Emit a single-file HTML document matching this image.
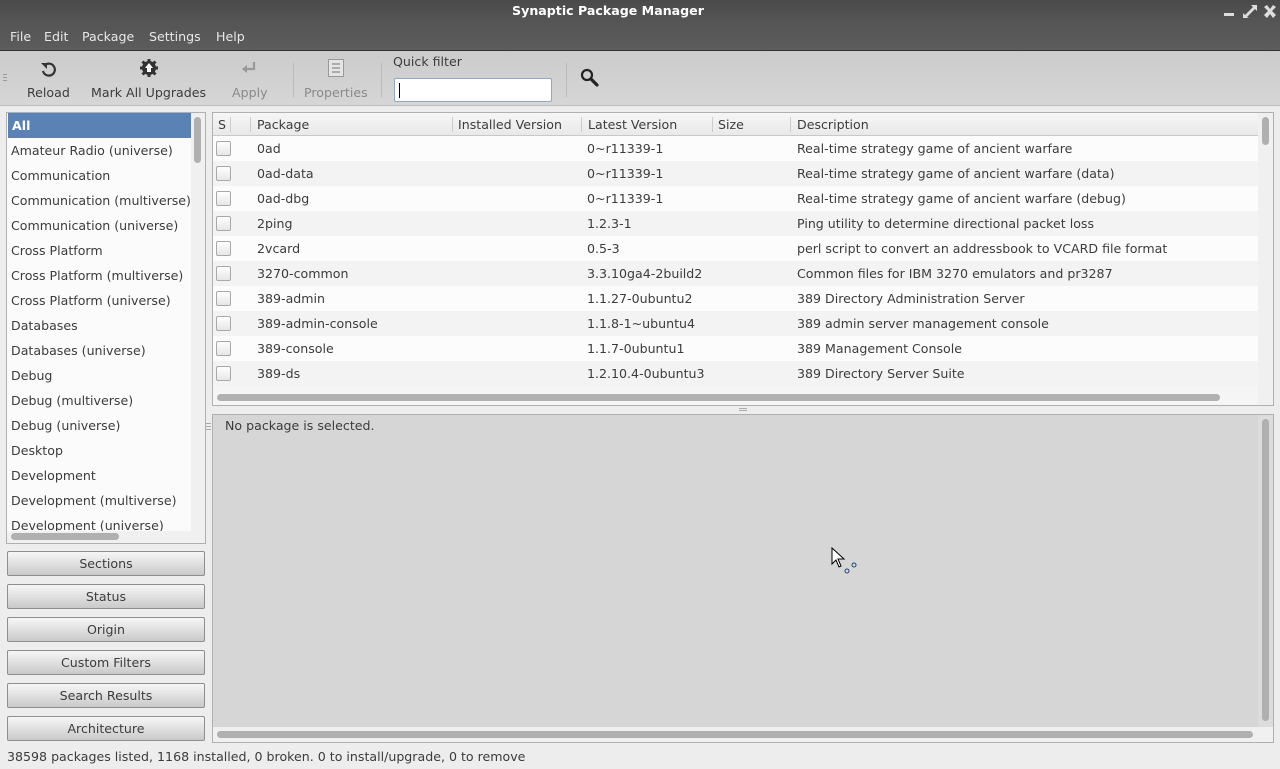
<!DOCTYPE html>
<html><head><meta charset="utf-8"><style>
*{margin:0;padding:0;box-sizing:border-box}
body{width:1280px;height:769px;overflow:hidden;background:#ededed;font-family:"DejaVu Sans","Liberation Sans",sans-serif;font-size:12.6px;color:#3c3c3c;position:relative}
.a{position:absolute}
#title{left:0;top:1px;width:1216px;height:22px;background:transparent;color:#fff;font-weight:bold;text-align:center;line-height:20px;font-size:12.6px}
#tbg{left:0;top:0;width:1280px;height:22px;background:linear-gradient(#4a4a4a,#555)}
#menu{left:0;top:22px;width:1280px;height:29px;background:linear-gradient(#555,#5c5c5c);border-bottom:1px solid #333;color:#e8e8e8}
#menu span{position:absolute;top:7px}
#tb{left:0;top:51px;width:1280px;height:55px;background:linear-gradient(#cbcbcb,#d6d6d6);border-bottom:1px solid #bdbdbd}
.tl{position:absolute;top:34px;color:#3c3c3c}
.dis{color:#8a8a8a}
.sep{position:absolute;top:12px;width:1px;height:34px;background:#bbb}
#left{left:6px;top:112px;width:200px;height:432px;background:#fbfbfb;border:1px solid #b0b0b0;overflow:hidden}
#left div.r{position:absolute;left:0;width:184px;height:25px;line-height:25px;padding-left:4px;white-space:nowrap;overflow:hidden}
.btn{position:absolute;left:7px;width:198px;height:25px;border:1px solid #8e8e8e;border-radius:2px;background:linear-gradient(#f6f6f6,#dcdcdc 60%,#c9c9c9);text-align:center;line-height:24px;color:#3c3c3c}
#tbl{left:212px;top:112px;width:1062px;height:294px;background:#fcfcfc;border:1px solid #b0b0b0;overflow:hidden}
.hd{position:absolute;top:0;height:23px;line-height:24px;background:linear-gradient(#f6f6f6,#e9e9e9);border-bottom:1px solid #c8c8c8}
.hd span{position:absolute;top:0}
.hs{position:absolute;top:4px;width:1px;height:15px;background:#ccc}
.row{position:absolute;left:0;width:1045px;height:25px;line-height:26px}
.row span{position:absolute;top:0;white-space:nowrap}
.cb{position:absolute;left:3px;top:5px;width:15px;height:15px;border:1px solid #a9a9a9;border-radius:2px;background:linear-gradient(#fff,#e6e6e6)}
#det{left:212px;top:414px;width:1062px;height:329px;background:#d6d6d6;border:1px solid #b0b0b0}
</style></head><body>
<div id="tbg" class="a"></div>
<div id="title" class="a">Synaptic Package Manager</div>
<svg class="a" style="left:1222px;top:4px" width="56" height="16">
<rect x="2" y="9" width="10" height="3" fill="#ddd"/>
<path d="M21 14 L21 9 L23 11 L31 3 L29 1 L35 1 L35 7 L33 5 L25 13 L27 14 Z" fill="#ddd"/>
<path d="M42 3 L45 1 L48 5 L51 1 L54 3 L50 7 L54 11 L51 14 L48 10 L45 14 L42 11 L46 7Z" fill="#ddd"/>
</svg>
<div id="menu" class="a"><span style="left:10px">File</span><span style="left:44px">Edit</span><span style="left:82px">Package</span><span style="left:149px">Settings</span><span style="left:216px">Help</span></div>
<div id="tb" class="a">
<svg class="a" style="left:3px;top:23px" width="4" height="8"><rect y="0" width="4" height="1" fill="#999"/><rect y="3" width="4" height="1" fill="#999"/><rect y="6" width="4" height="1" fill="#999"/></svg>
<svg class="a" style="left:39px;top:9px" width="18" height="18"><path d="M6 5 A6 6 0 1 1 4 11" fill="none" stroke="#333" stroke-width="2.2"/><path d="M2 3 L8 3 L8 9Z" fill="#333"/></svg>
<div class="tl" style="left:27px">Reload</div>
<svg class="a" style="left:139px;top:7px" width="20" height="20"><circle cx="10" cy="10" r="7" fill="#333"/><g stroke="#333" stroke-width="3"><line x1="10" y1="1" x2="10" y2="19"/><line x1="1" y1="10" x2="19" y2="10"/><line x1="3.5" y1="3.5" x2="16.5" y2="16.5"/><line x1="16.5" y1="3.5" x2="3.5" y2="16.5"/></g><path d="M10 5 L14 10 L12 10 L12 14 L8 14 L8 10 L6 10Z" fill="#fff"/></svg>
<div class="tl" style="left:91px">Mark All Upgrades</div>
<svg class="a" style="left:241px;top:10px" width="16" height="14"><path d="M13 1 L13 8 L5 8" fill="none" stroke="#999" stroke-width="2.2"/><path d="M6 4 L1 8 L6 12Z" fill="#999"/></svg>
<div class="tl dis" style="left:232px">Apply</div>
<div class="sep" style="left:293px"></div>
<svg class="a" style="left:327px;top:7px" width="18" height="20"><rect x="1.5" y="1.5" width="15" height="17" fill="#e4e4e4" stroke="#999"/><g stroke="#999" stroke-width="1.5"><line x1="5" y1="6" x2="13" y2="6"/><line x1="5" y1="10" x2="13" y2="10"/><line x1="5" y1="14" x2="13" y2="14"/></g></svg>
<div class="tl dis" style="left:304px">Properties</div>
<div class="sep" style="left:381px"></div>
<div class="a" style="left:393px;top:3px">Quick filter</div>
<div class="a" style="left:394px;top:27px;width:158px;height:24px;background:#fff;border:1px solid #8fa8c7;border-radius:2px"><div style="position:absolute;left:4px;top:4px;width:1px;height:15px;background:#000"></div></div>
<div class="sep" style="left:566px"></div>
<svg class="a" style="left:580px;top:17px" width="20" height="20"><circle cx="7" cy="7" r="5" fill="none" stroke="#222" stroke-width="2.2"/><line x1="11" y1="11" x2="17" y2="17" stroke="#222" stroke-width="3.2" stroke-linecap="round"/></svg>
</div>

<div id="left" class="a">
<div class="r" style="top:0;background:#5a82b5;color:#fff;font-weight:bold;height:25px;width:183px;left:1px">All</div>
<div class="r" style="top:25px">Amateur Radio (universe)</div>
<div class="r" style="top:50px">Communication</div>
<div class="r" style="top:75px">Communication (multiverse)</div>
<div class="r" style="top:100px">Communication (universe)</div>
<div class="r" style="top:125px">Cross Platform</div>
<div class="r" style="top:150px">Cross Platform (multiverse)</div>
<div class="r" style="top:175px">Cross Platform (universe)</div>
<div class="r" style="top:200px">Databases</div>
<div class="r" style="top:225px">Databases (universe)</div>
<div class="r" style="top:250px">Debug</div>
<div class="r" style="top:275px">Debug (multiverse)</div>
<div class="r" style="top:300px">Debug (universe)</div>
<div class="r" style="top:325px">Desktop</div>
<div class="r" style="top:350px">Development</div>
<div class="r" style="top:375px">Development (multiverse)</div>
<div class="r" style="top:400px">Development (universe)</div>
<div class="a" style="left:184px;top:0;width:14px;height:430px;background:#f0f0f0"></div>
<div class="a" style="left:187px;top:4px;width:7px;height:46px;background:#b0b0b0;border-radius:4px"></div>
<div class="a" style="left:0;top:418px;width:198px;height:13px;background:#f0f0f0"></div>
<div class="a" style="left:4px;top:420px;width:108px;height:7px;background:#b0b0b0;border-radius:4px"></div>
</div>
<div class="btn" style="top:551px">Sections</div>
<div class="btn" style="top:584px">Status</div>
<div class="btn" style="top:617px">Origin</div>
<div class="btn" style="top:650px">Custom Filters</div>
<div class="btn" style="top:683px">Search Results</div>
<div class="btn" style="top:716px">Architecture</div>

<div id="tbl" class="a">
<div class="hd" style="left:0;width:1045px"><span style="left:5px">S</span><div class="hs" style="left:17px"></div><div class="hs" style="left:37px"></div><span style="left:44px">Package</span><div class="hs" style="left:239px"></div><span style="left:245px">Installed Version</span><div class="hs" style="left:368px"></div><span style="left:375px">Latest Version</span><div class="hs" style="left:499px"></div><span style="left:505px">Size</span><div class="hs" style="left:577px"></div><span style="left:584px">Description</span></div>
<div class="row" style="top:23px;background:#fcfcfc"><div class="cb"></div><span style="left:44px">0ad</span><span style="left:374px">0~r11339-1</span><span style="left:584px">Real-time strategy game of ancient warfare</span></div>
<div class="row" style="top:48px;background:#f3f3f3"><div class="cb"></div><span style="left:44px">0ad-data</span><span style="left:374px">0~r11339-1</span><span style="left:584px">Real-time strategy game of ancient warfare (data)</span></div>
<div class="row" style="top:73px;background:#fcfcfc"><div class="cb"></div><span style="left:44px">0ad-dbg</span><span style="left:374px">0~r11339-1</span><span style="left:584px">Real-time strategy game of ancient warfare (debug)</span></div>
<div class="row" style="top:98px;background:#f3f3f3"><div class="cb"></div><span style="left:44px">2ping</span><span style="left:374px">1.2.3-1</span><span style="left:584px">Ping utility to determine directional packet loss</span></div>
<div class="row" style="top:123px;background:#fcfcfc"><div class="cb"></div><span style="left:44px">2vcard</span><span style="left:374px">0.5-3</span><span style="left:584px">perl script to convert an addressbook to VCARD file format</span></div>
<div class="row" style="top:148px;background:#f3f3f3"><div class="cb"></div><span style="left:44px">3270-common</span><span style="left:374px">3.3.10ga4-2build2</span><span style="left:584px">Common files for IBM 3270 emulators and pr3287</span></div>
<div class="row" style="top:173px;background:#fcfcfc"><div class="cb"></div><span style="left:44px">389-admin</span><span style="left:374px">1.1.27-0ubuntu2</span><span style="left:584px">389 Directory Administration Server</span></div>
<div class="row" style="top:198px;background:#f3f3f3"><div class="cb"></div><span style="left:44px">389-admin-console</span><span style="left:374px">1.1.8-1~ubuntu4</span><span style="left:584px">389 admin server management console</span></div>
<div class="row" style="top:223px;background:#fcfcfc"><div class="cb"></div><span style="left:44px">389-console</span><span style="left:374px">1.1.7-0ubuntu1</span><span style="left:584px">389 Management Console</span></div>
<div class="row" style="top:248px;background:#f3f3f3"><div class="cb"></div><span style="left:44px">389-ds</span><span style="left:374px">1.2.10.4-0ubuntu3</span><span style="left:584px">389 Directory Server Suite</span></div>
<div class="a" style="left:0;top:273px;width:1045px;height:20px;background:#f5f5f5"></div>
<div class="a" style="left:1045px;top:0;width:15px;height:292px;background:#f0f0f0"></div>
<div class="a" style="left:1049px;top:4px;width:7px;height:28px;background:#b0b0b0;border-radius:4px"></div>
<div class="a" style="left:4px;top:281px;width:1003px;height:7px;background:#b0b0b0;border-radius:4px"></div>
</div>
<svg class="a" style="left:739px;top:408px" width="8" height="4"><rect width="8" height="1" fill="#aaa"/><rect y="2" width="8" height="1" fill="#aaa"/></svg>
<svg class="a" style="left:206px;top:423px" width="5" height="8"><rect width="5" height="1" fill="#aaa"/><rect y="3" width="5" height="1" fill="#aaa"/><rect y="6" width="5" height="1" fill="#aaa"/></svg>
<div id="det" class="a">
<div class="a" style="left:12px;top:3px">No package is selected.</div>
<div class="a" style="left:1045px;top:0;width:15px;height:312px;background:#dcdcdc"></div>
<div class="a" style="left:1049px;top:4px;width:7px;height:302px;background:#b0b0b0;border-radius:4px"></div>
<div class="a" style="left:0;top:312px;width:1060px;height:15px;background:#f0f0f0"></div>
<div class="a" style="left:4px;top:316px;width:1036px;height:7px;background:#b0b0b0;border-radius:4px"></div>
<svg class="a" style="left:618px;top:132px" width="30" height="32"><path d="M1 1 L1 17 L5 13 L8 20 L10 19 L7 12 L13 12Z" fill="#fff" stroke="#000" stroke-width="1"/><circle cx="23" cy="18" r="2" fill="#cde" stroke="#246"/><circle cx="16" cy="24" r="2" fill="#cde" stroke="#246"/></svg>
</div>
<div class="a" style="left:7px;top:749px">38598 packages listed, 1168 installed, 0 broken. 0 to install/upgrade, 0 to remove</div>
</body></html>
